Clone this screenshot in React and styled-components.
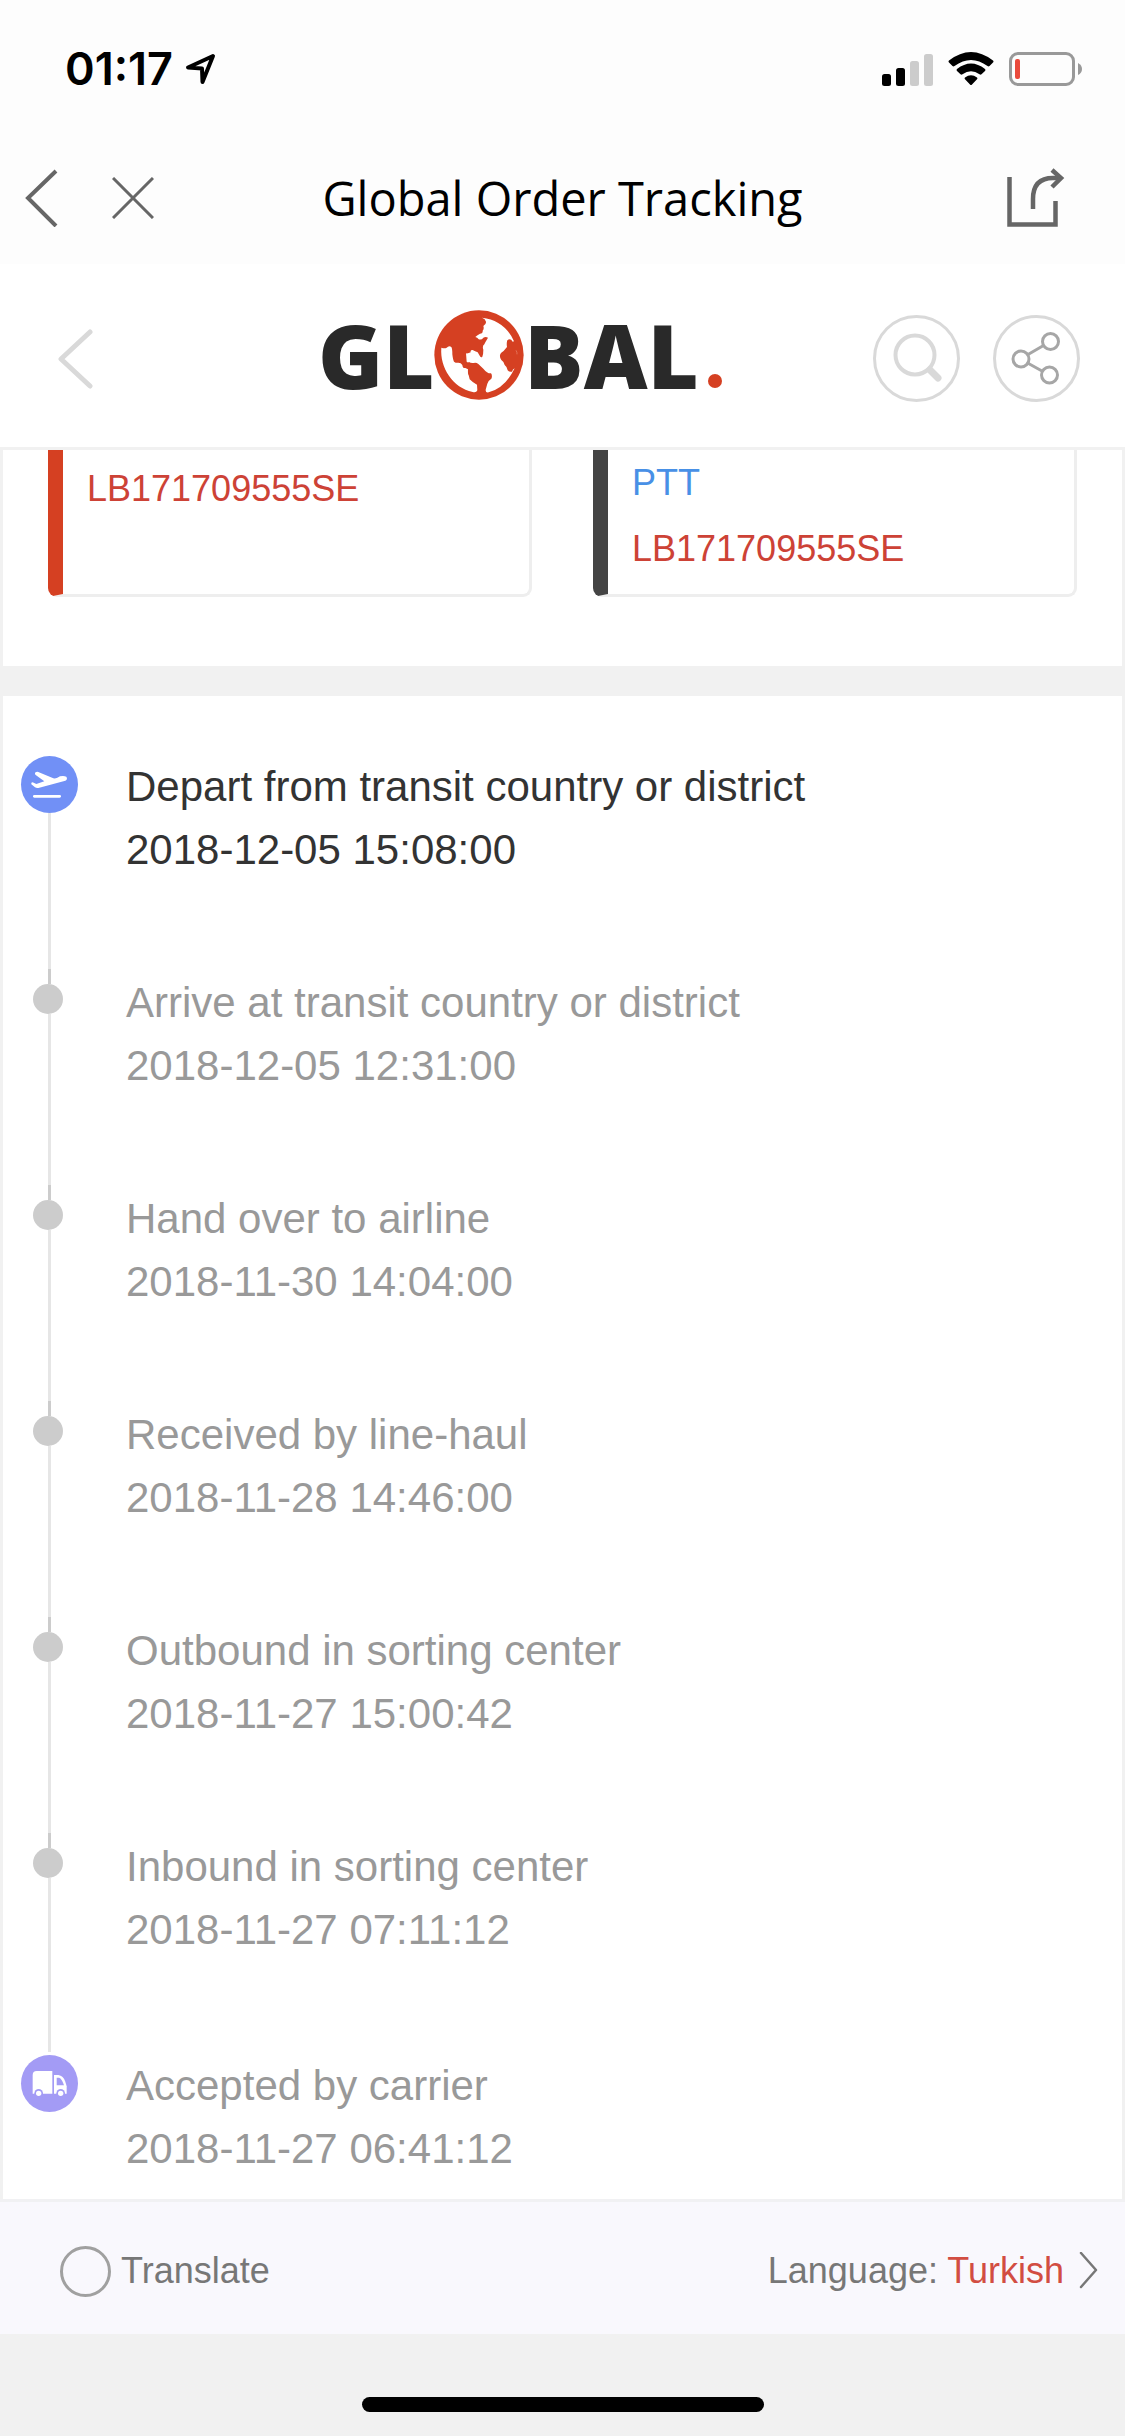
import React from "react";
import styled, { createGlobalStyle } from "styled-components";

const GlobalStyle = createGlobalStyle`
	*{
		box-sizing: border-box;
		margin: 0;
		padding: 0;
	}
	body{
		background: #f1f1f1;
		font-family: "Liberation Sans", Arial, sans-serif;
	}
	button{
		border: none;
		background: none;
		font: inherit;
		color: inherit;
		cursor: pointer;
	}
	svg{
		display: block;
	}
`

const Page = styled.div`
	min-height: 100vh;
	display: flex;
	flex-direction: column;
`

const StatusBar = styled.div`
	height: 132px;
	padding: 6px 42px 0 65px;
	display: flex;
	align-items: center;
	justify-content: space-between;
	background: #fdfdfd;
`

const StatusGroup = styled.div`
	display: flex;
	align-items: center;
	gap: ${props => props.$gap}px;
`

const Clock = styled.span`
	font-family: Inter, sans-serif;
	font-size: 45px;
	font-weight: 600;
	line-height: 54px;
	color: #000;
`

const NavBar = styled.nav`
	height: 132px;
	padding: 0 24px;
	display: grid;
	grid-template-columns: 1fr auto 1fr;
	align-items: center;
	background: #fdfdfd;
`

const NavGroup = styled.div`
	display: flex;
	align-items: center;
	gap: 54px;
`

const Title = styled.h1`
	font-family: "Open Sans", sans-serif;
	font-size: 47px;
	font-weight: 400;
	line-height: 66px;
	color: #000;
`

const ShareButton = styled.button`
	justify-self: end;
	padding-right: 36px;
`

const Header = styled.header`
	height: 186px;
	padding: 6px 45px 0;
	display: grid;
	grid-template-columns: 1fr 489px 1fr;
	align-items: center;
	background: #fff;
	border-bottom: 3px solid #f1f1f1;
`

const BackButton = styled.button`
	justify-self: start;
	padding-left: 12px;
`

const Logo = styled.a`
	display: flex;
	align-items: center;
	height: 98px;
	padding-bottom: 8px;
	font-family: "Open Sans", sans-serif;
	font-size: 88px;
	font-weight: 800;
	line-height: 90px;
	color: #292929;
	text-decoration: none;
`

const LogoDot = styled.i`
	align-self: flex-end;
	width: 14px;
	height: 14px;
	margin: 0 0 12px 9px;
	border-radius: 50%;
	background: #d54022;
`

const Actions = styled.div`
	display: flex;
	justify-content: flex-end;
	gap: 33px;
`

const RoundButton = styled.button`
	width: 87px;
	height: 87px;
	border: 3px solid #d9d9d9;
	border-radius: 50%;
`

const Panel = styled.section`
	background: #fff;
	border: solid #f1f1f1;
	border-width: 0 3px;
`

const Cards = styled(Panel)`
	display: grid;
	grid-template-columns: 1fr 1fr;
	gap: 61px;
	padding: 0 45px 69px;
`

const Card = styled.div`
	display: flex;
	flex-direction: column;
	height: 147px;
	padding-left: 24px;
	border: 3px solid #eee;
	border-top: none;
	border-left: 15px solid ${props => props.$accent};
	border-radius: 0 0 9px 9px;
	font-size: 36px;
	line-height: ${props => props.$line}px;
`

const CarrierLink = styled.a`
	color: #4890e6;
	text-decoration: none;
`

const TrackingNumber = styled.span`
	color: #cd4236;
`

const Divider = styled.div`
	height: 30px;
	background: #f1f1f1;
`

const Timeline = styled(Panel).attrs({ as: "ol" })`
	list-style: none;
	padding: 57px 18px 0;
`

const Event = styled.li`
	min-height: 216px;
	display: grid;
	grid-template-columns: 57px 1fr;
	gap: 48px;
	color: ${props => props.$current ? "#333" : "#999"};
	&:nth-last-child(2){
		min-height: 219px;
	}
	&:last-child{
		min-height: 147px;
	}
`

const Marker = styled.div`
	display: flex;
	flex-direction: column;
	align-items: center;
`

const Badge = styled.span`
	flex: none;
	width: 57px;
	height: 57px;
	margin-top: 3px;
	border-radius: 50%;
	background: ${props => props.$color};
`

const Tick = styled.span`
	width: 3px;
	height: 15px;
	background: #ccc;
`

const Dot = styled.span`
	width: 30px;
	height: 30px;
	margin-right: 3px;
	border-radius: 50%;
	background: #ccc;
`

const Line = styled.span`
	flex: 1;
	width: 3px;
	background: #e6e6e6;
`

const EventText = styled.div`
	padding-top: 2px;
	font-size: 42px;
	line-height: 63px;
`

const Footer = styled.footer`
	height: 135px;
	padding: 6px 26px 0 60px;
	display: flex;
	align-items: center;
	justify-content: space-between;
	background: #f9f8fd;
	border-top: 3px solid #f1f1f3;
	font-size: 36px;
	line-height: 48px;
	color: #777;
`

const Translate = styled.label`
	display: flex;
	align-items: center;
	gap: 10px;
`

const Check = styled.input`
	appearance: none;
	width: 51px;
	height: 51px;
	border: 3px solid #a0a0a0;
	border-radius: 50%;
	&:checked{
		background: #d24d42;
	}
`

const LanguageButton = styled.button`
	display: flex;
	align-items: center;
	gap: 15px;
	em{
		font-style: normal;
		color: #d24d42;
	}
`

const HomeArea = styled.div`
	flex: 1;
	min-height: 102px;
	padding-bottom: 24px;
	display: flex;
	align-items: flex-end;
	justify-content: center;
`

const HomeBar = styled.div`
	width: 402px;
	height: 15px;
	border-radius: 8px;
	background: #000;
`

const LocationIcon = () => (
	<svg width="31" height="32" viewBox="0 0 31 32" fill="none" stroke="#000" strokeWidth="4" strokeLinejoin="round">
		<path d="M28 3L3 14.5L17 15.5L17.5 29Z"/>
	</svg>
)

const SignalIcon = () => (
	<svg width="51" height="33" viewBox="0 0 51 33">
		<rect x="0" y="21" width="9" height="12" rx="2.5"/>
		<rect x="14" y="15" width="9" height="18" rx="2.5"/>
		<rect x="28" y="8" width="9" height="25" rx="2.5" fill="#ccc"/>
		<rect x="42" y="1" width="9" height="32" rx="2.5" fill="#ccc"/>
	</svg>
)

const WifiIcon = () => (
	<svg width="46" height="34" viewBox="0 0 46 34">
		<path d="M1 8.5Q23 -8.5 45 8.5Q46 9.5 45 10.5L41.5 14Q40.5 14.8 39.5 14Q23 2 6.5 14Q5.5 14.8 4.5 14L1 10.5Q0 9.5 1 8.5Z"/>
		<path d="M9 17Q23 6 37 17Q38 18 37 19L33.5 22.3Q32.5 23 31.5 22.3Q23 16 14.5 22.3Q13.5 23 12.5 22.3L9 19Q8 18 9 17Z"/>
		<path d="M17 25.5Q23 21 29 25.5Q30 26.3 29 27.3L24 32.5Q23 33.5 22 32.5L17 27.3Q16 26.3 17 25.5Z"/>
	</svg>
)

const BatteryIcon = () => (
	<svg width="74" height="34" viewBox="0 0 74 34">
		<rect x="1.5" y="1.5" width="63" height="31" rx="7.5" fill="none" stroke="#999" strokeWidth="3"/>
		<rect x="6" y="7" width="5" height="20" rx="2" fill="#ea4a3c"/>
		<path d="M69 11Q73 13 73 17Q73 21 69 23Z" fill="#999"/>
	</svg>
)

const NavBackIcon = () => (
	<svg width="34" height="58" viewBox="0 0 34 58" fill="none" stroke="#666" strokeWidth="4">
		<path d="M32 2L4 29L32 57"/>
	</svg>
)

const CloseIcon = () => (
	<svg width="42" height="42" viewBox="0 0 42 42" stroke="#666" strokeWidth="3">
		<path d="M1 1L41 41M41 1L1 41"/>
	</svg>
)

const ExportIcon = () => (
	<svg width="60" height="60" viewBox="0 0 60 60" fill="none" stroke="#666" strokeWidth="4.5">
		<path d="M4.5 9V56.5H50.5V33"/>
		<path d="M28 41V31Q28 10 48 10H56"/>
		<path d="M47 2L56 10L47 19"/>
	</svg>
)

const BackIcon = () => (
	<svg width="36" height="60" viewBox="0 0 36 60" fill="none" stroke="#d9d9d9" strokeWidth="5" strokeLinecap="round" strokeLinejoin="round">
		<path d="M33 3L4 30L33 57"/>
	</svg>
)

const SearchIcon = () => (
	<svg width="81" height="81" viewBox="0 0 81 81" fill="none" stroke="#d9d9d9" strokeLinecap="round">
		<circle cx="39" cy="37" r="19.5" strokeWidth="4"/>
		<path d="M54 52L62 60" strokeWidth="7"/>
	</svg>
)

const NodesIcon = () => (
	<svg width="81" height="81" viewBox="0 0 81 81" fill="none" stroke="#a6a6a6" strokeWidth="3">
		<circle cx="25" cy="41" r="8"/>
		<circle cx="54.5" cy="23.5" r="8"/>
		<circle cx="53.5" cy="57" r="8"/>
		<path d="M32 36.5L47.5 27.5M32.5 45.5L46 53"/>
	</svg>
)

const GlobeIcon = () => (
	<svg width="90" height="90" viewBox="398 57 270 270">
		<circle cx="533" cy="192" r="134" fill="#d54022"/>
		<path fill="#fff" d="M542 80Q552 83 554 92Q555 100 546 105Q549 113 544 119Q545 128 536 128Q526 133 522 138Q528 139 532 145Q541 148 546 140Q553 136 560 140Q552 153 549 160Q542 165 546 176Q546 190 543 197Q539 201 536 196L529 184Q518 180 514 177Q506 177 508 184Q501 188 494 187L496 212Q500 216 503 213Q508 217 517 216Q524 213 531 219L546 233Q558 248 569 247Q574 254 570 263Q559 270 558 278L553 296Q552 306 562 304Q612 290 640 232Q634 235 632 242Q624 244 619 238Q618 228 610 222Q608 212 600 207Q592 195 599 186Q608 180 617 168Q615 156 618 148Q627 140 634 152L638 151Q610 88 542 80Z"/>
		<path fill="#fff" d="M420 170Q430 174 436 170Q443 162 450 168Q453 172 453 190Q455 207 458 212Q465 217 471 215Q479 215 483 222Q484 233 492 231L500 235Q499 249 502 253L505 265Q512 273 527 281L528 298Q525 306 514 303C455 290 415 230 420 170Z"/>
		<path d="M644 178Q648 184 647 190" fill="none" stroke="#e88a72" strokeWidth="2"/>
	</svg>
)

const PlaneIcon = () => (
	<svg width="57" height="57" viewBox="0 0 171 171" fill="#fff">
		<path d="M50 47L97 67Q103 68 109 65L117 61Q128 58 136 62Q141 70 133 74L52 96Q46 97 42 94L31 85Q29 79 35 79L46 84L70 76L43 56Q39 47 50 47Z"/>
		<rect x="36" y="117" width="84" height="8" rx="4"/>
	</svg>
)

const TruckIcon = () => (
	<svg width="57" height="57" viewBox="0 0 171 171">
		<path d="M47 48H94V116H35V60Q35 48 47 48Z" fill="#fff"/>
		<path d="M99 60H112Q127 62 133 80L137 94V116H99Z" fill="#fff"/>
		<path d="M107 68H114Q123 71 129 91H107Z" fill="#a39bf5"/>
		<circle cx="53" cy="115" r="13" fill="#a39bf5"/>
		<circle cx="119" cy="115" r="13" fill="#a39bf5"/>
		<circle cx="53" cy="115" r="8" fill="#fff"/>
		<circle cx="119" cy="115" r="8" fill="#fff"/>
	</svg>
)

const ChevronIcon = () => (
	<svg width="20" height="38" viewBox="0 0 20 38" fill="none" stroke="#777" strokeWidth="2.5" strokeLinecap="round" strokeLinejoin="round">
		<path d="M2 1L17 18L2 35"/>
	</svg>
)

const events = [
	{ text: "Depart from transit country or district", time: "2018-12-05 15:08:00", icon: <PlaneIcon/>, color: "#7190f6" },
	{ text: "Arrive at transit country or district", time: "2018-12-05 12:31:00" },
	{ text: "Hand over to airline", time: "2018-11-30 14:04:00" },
	{ text: "Received by line-haul", time: "2018-11-28 14:46:00" },
	{ text: "Outbound in sorting center", time: "2018-11-27 15:00:42" },
	{ text: "Inbound in sorting center", time: "2018-11-27 07:11:12" },
	{ text: "Accepted by carrier", time: "2018-11-27 06:41:12", icon: <TruckIcon/>, color: "#a39bf5" },
]

const App = () => {
	return (
		<Page>
			<GlobalStyle/>
			<StatusBar>
				<StatusGroup $gap={12}>
					<Clock>01:17</Clock>
					<LocationIcon/>
				</StatusGroup>
				<StatusGroup $gap={15}>
					<SignalIcon/>
					<WifiIcon/>
					<BatteryIcon/>
				</StatusGroup>
			</StatusBar>
			<NavBar>
				<NavGroup>
					<button aria-label="Back"><NavBackIcon/></button>
					<button aria-label="Close"><CloseIcon/></button>
				</NavGroup>
				<Title>Global Order Tracking</Title>
				<ShareButton aria-label="Share page"><ExportIcon/></ShareButton>
			</NavBar>
			<Header>
				<BackButton aria-label="Previous"><BackIcon/></BackButton>
				<Logo href="#" aria-label="Global">
					<span>GL</span>
					<GlobeIcon/>
					<span>BAL</span>
					<LogoDot/>
				</Logo>
				<Actions>
					<RoundButton aria-label="Search"><SearchIcon/></RoundButton>
					<RoundButton aria-label="Share"><NodesIcon/></RoundButton>
				</Actions>
			</Header>
			<Cards>
				<Card $accent="#d54022" $line={78}>
					<TrackingNumber>LB171709555SE</TrackingNumber>
				</Card>
				<Card $accent="#444" $line={66}>
					<CarrierLink href="#">PTT</CarrierLink>
					<TrackingNumber>LB171709555SE</TrackingNumber>
				</Card>
			</Cards>
			<Divider/>
			<Timeline>
				{events.map((event, i) => (
					<Event key={event.time} $current={i === 0}>
						<Marker>
							{event.icon ? (
								<Badge $color={event.color}>{event.icon}</Badge>
							) : (
								<>
									<Tick/>
									<Dot/>
								</>
							)}
							{i < events.length - 1 && <Line/>}
						</Marker>
						<EventText>
							<p>{event.text}</p>
							<time>{event.time}</time>
						</EventText>
					</Event>
				))}
			</Timeline>
			<Footer>
				<Translate>
					<Check type="checkbox"/>
					Translate
				</Translate>
				<LanguageButton>
					<span>Language: <em>Turkish</em></span>
					<ChevronIcon/>
				</LanguageButton>
			</Footer>
			<HomeArea>
				<HomeBar/>
			</HomeArea>
		</Page>
	)
}

export default App
